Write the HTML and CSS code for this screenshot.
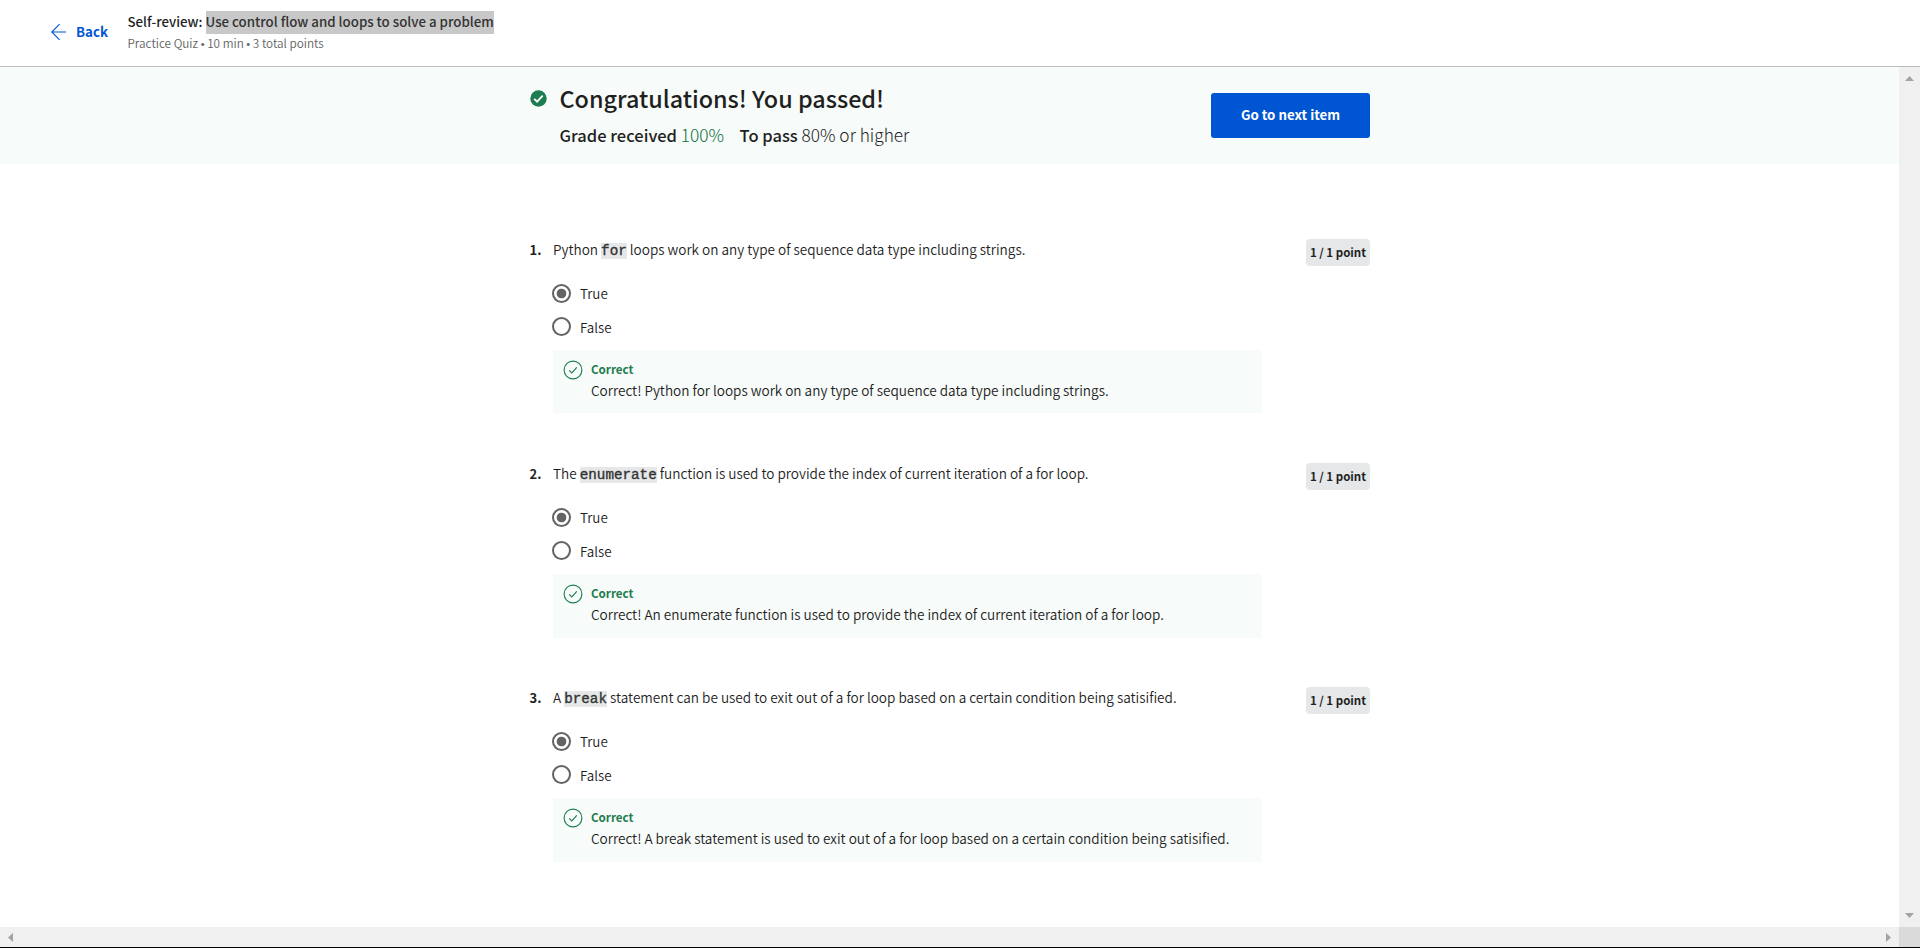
FILE: index.html
```html
<!DOCTYPE html>
<html lang="en">
<head>
<meta charset="utf-8">
<title>Self-review</title>
<link rel="stylesheet" href="styles.css">
</head>
<body>
<svg class="defs" width="0" height="0">
  <symbol id="ok" viewBox="0 0 20 20"><circle cx="10" cy="10" r="8.9" fill="none" stroke="#1d7c50" stroke-width="1.1"/><path d="M6.2 10.3l2.6 2.6 5-5.6" fill="none" stroke="#1d7c50" stroke-width="1.1"/></symbol>
</svg>
<header class="topbar">
  <a class="back"><svg width="16" height="18" viewBox="0 0 16 18"><path d="M15.2 9H1M8.6 1.2L.8 9l7.8 7.8" fill="none" stroke="#0056d2" stroke-width="1.1"/></svg><span>Back</span></a>
  <div class="heading">
    <div class="title">Self-review: <span class="selected">Use control flow and loops to solve a problem</span></div>
    <div class="sub">Practice Quiz <i class="dot">•</i> 10 min <i class="dot">•</i> 3 total points</div>
  </div>
</header>
<div class="viewport">
  <div class="page">
    <section class="banner">
      <svg class="passed" width="17" height="17" viewBox="0 0 17 17"><circle cx="8.5" cy="8.5" r="8.2" fill="#1d7c50"/><path d="M4.2 8.9l2.9 2.8 5.6-6" fill="none" stroke="#fff" stroke-width="1.8"/></svg>
      <div class="result">
        <h1>Congratulations! You passed!</h1>
        <div class="grades"><span class="item"><b>Grade received</b> <span class="green">100%</span></span><span class="item"><b>To pass</b> 80% or higher</span></div>
      </div>
      <button class="next">Go to next item</button>
    </section>
    <main class="quiz">
      <section class="question">
        <div class="num">1.</div>
        <div class="body">
          <p class="prompt">Python <code>for</code> loops work on any type of sequence data type including strings.</p>
          <div class="option"><i class="radio on"></i>True</div>
          <div class="option"><i class="radio"></i>False</div>
          <div class="feedback"><svg class="ok"><use href="#ok"/></svg><div><h2>Correct</h2><p>Correct! Python for loops work on any type of sequence data type including strings.</p></div></div>
        </div>
        <div class="points">1 / 1 point</div>
      </section>
      <section class="question">
        <div class="num">2.</div>
        <div class="body">
          <p class="prompt">The <code>enumerate</code> function is used to provide the index of current iteration of a for loop.</p>
          <div class="option"><i class="radio on"></i>True</div>
          <div class="option"><i class="radio"></i>False</div>
          <div class="feedback tall"><svg class="ok"><use href="#ok"/></svg><div><h2>Correct</h2><p>Correct! An enumerate function is used to provide the index of current iteration of a for loop.</p></div></div>
        </div>
        <div class="points">1 / 1 point</div>
      </section>
      <section class="question">
        <div class="num">3.</div>
        <div class="body">
          <p class="prompt">A <code>break</code> statement can be used to exit out of a for loop based on a certain condition being satisified.</p>
          <div class="option"><i class="radio on"></i>True</div>
          <div class="option"><i class="radio"></i>False</div>
          <div class="feedback tall"><svg class="ok"><use href="#ok"/></svg><div><h2>Correct</h2><p>Correct! A break statement is used to exit out of a for loop based on a certain condition being satisified.</p></div></div>
        </div>
        <div class="points">1 / 1 point</div>
      </section>
    </main>
  </div>
  <div class="vbar">
    <svg width="9" height="5" viewBox="0 0 9 5"><path d="M0 5L4.5 0 9 5z"/></svg>
    <svg width="9" height="5" viewBox="0 0 9 5"><path d="M0 0h9L4.5 5z"/></svg>
  </div>
  <div class="hbar">
    <svg width="5" height="9" viewBox="0 0 5 9"><path d="M5 0v9L0 4.5z"/></svg>
    <svg width="5" height="9" viewBox="0 0 5 9"><path d="M0 0v9l5-4.5z"/></svg>
  </div>
  <div class="corner"></div>
</div>
</body>
</html>
```
FILE: styles.css
```css
* { box-sizing: border-box; margin: 0; padding: 0; }
body {
  display: flex;
  flex-direction: column;
  height: 948px;
  overflow: hidden;
  background: #fff;
  border-bottom: 1px solid #000;
  color: #1f1f1f;
  font: 350 13.58px/20px "Noto Sans CJK SC", "Noto Sans", sans-serif;
  white-space: nowrap;
}
.defs { display: none; }
.topbar {
  display: flex;
  height: 67px;
  padding-left: 51px;
  border-bottom: 1px solid #bbb;
}
.back {
  display: flex;
  align-items: center;
  gap: 9px;
  width: 76.5px;
  height: 63px;
  color: #0056d2;
  font-size: 13.3px;
  font-weight: 700;
}
.heading { padding-top: 11px; }
.title { font-size: 13.29px; font-weight: 500; line-height: 21px; }
.selected { padding: 1px 0 3px; background: #c8c8c8; color: #333; }
.sub { font-size: 11.75px; line-height: 21px; color: #636363; }
.dot { font: normal 11px/1 "Liberation Sans", sans-serif; }

.viewport {
  display: grid;
  grid-template: 860px 20px / 1899px 21px;
}
.banner {
  display: flex;
  height: 97px;
  padding-left: 530px;
  background: #f7fbf9;
}
.passed { margin-top: 23px; }
.result { width: 652px; margin-left: 12.5px; padding-top: 14px; }
h1 { font-size: 23.37px; font-weight: 500; line-height: 34px; }
.grades {
  display: flex;
  gap: 15.5px;
  margin-top: 9px;
  font-size: 17.3px;
  font-weight: 300;
  line-height: 22px;
}
.grades b { font-size: 16.5px; font-weight: 500; }
.green { color: #0f7040; }
.next {
  width: 159px;
  height: 45px;
  margin-top: 26px;
  margin-left: -.5px;
  padding-bottom: 2px;
  border: 0;
  border-radius: 3px;
  background: #0056d2;
  color: #fff;
  font: 700 13.3px "Noto Sans CJK SC", "Noto Sans", sans-serif;
}

.quiz { padding: 75px 0 0 529.5px; }
.question {
  display: grid;
  grid-template-columns: 23.5px 753px 64px;
  align-items: start;
  height: 224px;
}
.num { padding-top: 1px; font-weight: 700; font-size: 13px; }
.prompt { margin-bottom: 17px; }
code {
  background: #e5e7e8;
  color: #333;
  font: 400 14.25px "Liberation Mono", monospace;
  -webkit-text-stroke: .35px #333;
}
.option { display: flex; align-items: center; height: 33.5px; padding-top: 1px; font-size: 13.4px; }
.radio {
  width: 19px;
  height: 19px;
  margin: 0 9px 0 -1px;
  border: 2px solid #636363;
  border-radius: 50%;
}
.radio.on { background: radial-gradient(circle, #636363 4.4px, transparent 5.2px); }
.feedback {
  display: flex;
  width: 709px;
  height: 63px;
  margin-top: 7px;
  padding: 9px 10.5px;
  background: #f7fbf9;
}
.feedback.tall { height: 64px; }
.ok { width: 20px; height: 20px; margin: 1px 8px 0 -.5px; }
h2 { color: #1d7c50; font-size: 11.6px; font-weight: 700; line-height: 20px; }
.feedback p { line-height: 22px; }
.points {
  height: 27px;
  border-radius: 4px;
  background: #e5e7e8;
  font-size: 11.5px;
  font-weight: 700;
  line-height: 27px;
  text-align: center;
}

.vbar, .hbar { display: flex; align-items: center; justify-content: space-between; background: #f0f0f0; fill: #a3a3a3; }
.vbar { flex-direction: column; padding: 9px 0; }
.hbar { padding: 0 8px; }
.corner { background: #dadada; }
```
